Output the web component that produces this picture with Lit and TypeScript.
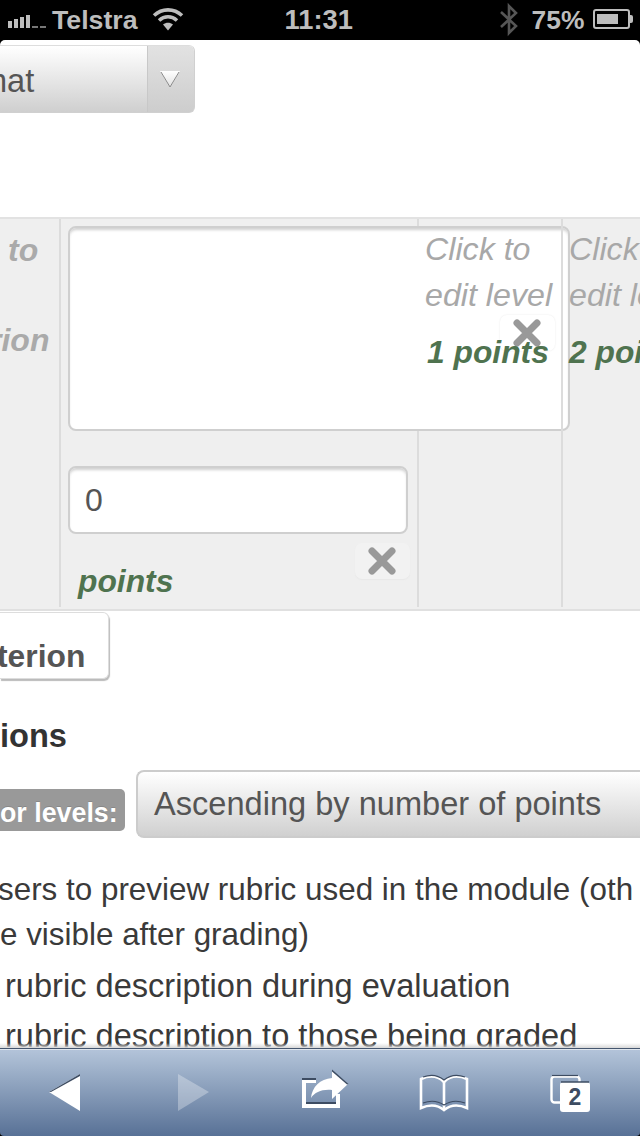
import { LitElement, html, css, svg } from "lit";
import { customElement } from "lit/decorators.js";

@customElement("app-root")
export class AppRoot extends LitElement {
  static styles = css`
    :host { display: flex; flex-direction: column; width: 640px; height: 1136px; overflow: hidden; background: #000; font-family: "Liberation Sans", Arial, sans-serif; }
    .status { height: 40px; flex: none; display: flex; align-items: center; color: #bdbdbd; font-size: 26.7px; font-weight: 700; position: relative; }
    .status svg { display: block; flex: none; }
    .sig { margin-left: 8px; }
    .carrier { margin-left: 6px; }
    .wifi { margin-left: 14px; }
    .time { margin-left: 101px; font-size: 27.3px; width: 68px; }
    .bt { margin-left: 146px; }
    .pct { margin-left: 13px; width: 61px; font-size: 26.4px; }
    .content { flex: 1; min-height: 0; background: #fff; border-radius: 5px 5px 0 0; overflow: hidden; display: flex; flex-direction: column; position: relative; color: #333; }
    .top { height: 177px; flex: none; padding-top: 5px; box-sizing: border-box; }
    .fmt { width: 195px; height: 68px; box-sizing: border-box; display: flex; border-radius: 0 6px 6px 0; border: 1px solid #d0d0d0; border-left: 0; border-top-color: #ddd; background: linear-gradient(#fff, #cfcfcf); color: #555; font-size: 32.6px; overflow: hidden; }
    .fmt .v { flex: 1; line-height: 70px; margin-left: -11px; }
    .fmt .arrow { width: 47px; padding-right: 3px; box-sizing: border-box; background: linear-gradient(#e2e2e2, #cdcdcd); border-left: 1px solid #c8c8c8; display: flex; align-items: center; justify-content: center; }
    .table { height: 394px; flex: none; box-sizing: border-box; background: #efefef; border-top: 2px solid #e2e2e2; border-bottom: 2px solid #e0e0e0; display: flex; font-size: 32px; line-height: 46px; position: relative; }
    .col { height: 388px; box-sizing: border-box; flex: none; }
    .c1 { width: 61px; border-right: 2px solid #dcdcdc; padding-top: 8px; font-weight: 700; font-style: italic; color: #aaa; white-space: nowrap; }
    .c1 div { height: 45px; }
    .c1 .a { margin-left: 8px; }
    .c1 .b { margin-top: 45px; margin-left: -11px; }
    .c2 { width: 358px; border-right: 2px solid #dcdcdc; padding: 7px 0 0 7px; position: relative; }
    .area { width: 502px; height: 205px; box-sizing: border-box; background: #fff; border: 2px solid #cfcfcf; border-radius: 8px; box-shadow: inset 0 3px 3px -1px #d0d0d0; position: relative; }
    .input { width: 340px; height: 68px; margin-top: 35px; box-sizing: border-box; background: #fff; border: 2px solid #cfcfcf; border-radius: 8px; box-shadow: inset 0 3px 3px -1px #d0d0d0; font-size: 32px; line-height: 64px; padding-left: 15px; color: #555; }
    .xbtn { box-sizing: border-box; width: 55px; height: 36px; padding-right: 2px; border-radius: 7px; display: flex; align-items: center; justify-content: center; }
    .x1 { background: #f2f2f2; margin: 9px 0 0 287px; box-shadow: 0 1px 1px #e8e8e8; }
    .pts { font-weight: 700; font-style: italic; color: #4f734f; white-space: nowrap; font-size: 31.8px; }
    .c2 .pts { margin: -21px 0 0 10px; }
    .c3 { width: 144px; border-right: 2px solid #dcdcdc; padding: 7px 0 0 6px; position: relative; }
    .c3 .txt, .c4 .txt { font-style: italic; color: #a8a8a8; white-space: nowrap; font-size: 32.2px; position: relative; z-index: 2; }
    .c3 .pts, .c4 .pts { position: relative; z-index: 2; margin-top: 11px; margin-left: 2px; }
    .x2 { position: absolute; z-index: 1; left: 81px; top: 96px; background: #fff; box-shadow: 0 0 2px #e8e8e8; }
    .c4 { flex: 1; padding: 7px 0 0 6px; overflow: hidden; }
    .c4 .pts { margin-left: 0; }
    .add { width: 109px; height: 67px; margin-top: 1px; box-sizing: border-box; flex: none; background: #fff; border: 1px solid #ddd; border-left: 0; border-radius: 0 6px 6px 0; box-shadow: 1px 2px 1px #bbb; font-weight: 700; font-size: 31.8px; color: #555; line-height: 86px; overflow: hidden; white-space: nowrap; }
    .add span { margin-left: -3px; }
    h3 { margin: 35px 0 0 0; font-size: 32.6px; line-height: 44px; font-weight: 700; color: #333; }
    .row { display: flex; align-items: flex-start; margin-top: 12px; }
    .badge { width: 125px; height: 42px; box-sizing: border-box; margin-top: 19px; flex: none; background: #999; color: #fff; font-weight: 700; font-size: 26.8px; line-height: 48px; border-radius: 0 5px 5px 0; white-space: nowrap; text-shadow: 0 -1px 0 #888; }
    .sel { margin-left: 11px; flex: 1; height: 68px; box-sizing: border-box; border: 2px solid #ccc; border-right: 0; border-radius: 8px 0 0 8px; background: linear-gradient(#fff, #d0d0d0); color: #555; font-size: 32.6px; line-height: 64px; padding-left: 16px; white-space: nowrap; }
    .lines { margin-top: 29px; font-size: 32.6px; color: #3a3a3a; white-space: nowrap; }
    .lines div { height: 45px; line-height: 45px; }
    .lines .w { font-size: 31.4px; }
    .lines .l1 { margin-left: -2px; }
    .lines .i { margin-left: 5px; }
    .lines .gap { margin-top: 6px; }
    .lines .gap2 { margin-top: 5px; }
    .fade { position: absolute; left: 0; right: 0; bottom: 0; height: 5px; background: linear-gradient(rgba(255,255,255,0), #d8d8d8); }
    .bar { height: 88px; flex: none; box-sizing: border-box; border-top: 1px solid #45566f; background: linear-gradient(#b4c4da 0, #a9bbd2 12%, #587196 100%); border-radius: 0 0 4px 4px; box-shadow: inset 0 1px 0 #dfe6ee; }
    .bar svg { display: block; }
    .tabn { font-family: "Liberation Sans", Arial, sans-serif; font-size: 23px; font-weight: 700; fill: #3d4c62; }
  `;

  render() {
    return html`
      <div class="status">
        <svg class="sig" width="38" height="40">
          <g fill="#bdbdbd"><rect x="0" y="21" width="4" height="7"/><rect x="6" y="19" width="4" height="9"/><rect x="12" y="17" width="4" height="11"/><rect x="18" y="15" width="4" height="13"/></g>
          <g fill="#777"><rect x="24" y="26" width="6" height="2"/><rect x="32" y="26" width="6" height="2"/></g>
        </svg>
        <span class="carrier">Telstra</span>
        <svg class="wifi" width="32" height="40" viewBox="0 0 32 40"><g fill="none" stroke="#bdbdbd" stroke-width="3.6"><path d="M2 15.5C10 8 22 8 30 15.5"/><path d="M7 20.5C12.5 15.5 19.5 15.5 25 20.5"/></g><path d="M11 24.5C14 22 18 22 21 24.5L16 30.5Z" fill="#bdbdbd"/></svg>
        <span class="time">11:31</span>
        <svg class="bt" width="20" height="40" viewBox="0 0 20 40"><path d="M2 12L17 26L10 33V6L17 13L2 27" fill="none" stroke="#565656" stroke-width="2.6"/></svg>
        <span class="pct">75%</span>
        <svg class="bat" width="42" height="40" viewBox="0 0 42 40"><rect x="1" y="10" width="35" height="18" rx="2" fill="none" stroke="#bdbdbd" stroke-width="2"/><rect x="4" y="14" width="21" height="10" fill="#bdbdbd"/><path d="M37 15h1a2 2 0 0 1 2 2v4a2 2 0 0 1-2 2h-1z" fill="#bdbdbd"/></svg>
      </div>
      <div class="content">
        <div class="top">
          <div class="fmt">
            <div class="v">hat</div>
            <div class="arrow"><svg width="20" height="18" viewBox="0 0 20 18"><defs><linearGradient id="ag" x1="0" y1="0" x2="0" y2="1"><stop offset="0" stop-color="#fff"/><stop offset="1" stop-color="#fff" stop-opacity=".2"/></linearGradient></defs><path d="M0 1H20L10 18Z" fill="url(#ag)"/><path d="M1 2L10 17L19 2" fill="none" stroke="#8a8a8a" stroke-width="1"/></svg></div>
          </div>
        </div>
        <div class="table">
          <div class="col c1"><div class="a">to</div><div class="b">rion</div></div>
          <div class="col c2">
            <div class="area"></div>
            <div class="input">0</div>
            <div class="xbtn x1">${this.x()}</div>
            <div class="pts">points</div>
          </div>
          <div class="col c3">
            <div class="txt">Click to<br />edit level</div>
            <div class="pts">1 points</div>
            <div class="xbtn x2">${this.x()}</div>
          </div>
          <div class="col c4">
            <div class="txt">Click to<br />edit level</div>
            <div class="pts">2 points</div>
          </div>
        </div>
        <div class="add"><span>terion</span></div>
        <h3>ions</h3>
        <div class="row">
          <div class="badge">or levels:</div>
          <div class="sel">Ascending by number of points</div>
        </div>
        <div class="lines">
          <div class="w l1">sers to preview rubric used in the module (oth</div>
          <div class="w">e visible after grading)</div>
          <div class="i gap">rubric description during evaluation</div>
          <div class="i gap2">rubric description to those being graded</div>
        </div>
        <div class="fade"></div>
      </div>
      <div class="bar">
        <svg width="640" height="87" viewBox="0 1049 640 87">
          <path d="M49 1092L80 1074V1111Z" fill="#fff"/><path d="M49 1092L80 1074V1076L51 1092Z" fill="#3d4c62"/>
          <path d="M178 1074L209 1092L178 1111Z" fill="#fff" opacity=".3"/>
          <g>
            <path d="M302 1080H316V1083H306V1104H336V1094H340V1108H302Z" fill="#fff"/>
            <path d="M302 1078H316V1080H302ZM306 1102H336V1104H306Z" fill="#3d4c62"/>
            <path d="M332 1071L348 1084L332 1099V1090C322 1089 315 1092 311 1098C312 1087 320 1079 332 1078Z" fill="#fff"/>
            <path d="M332 1069.5L348.5 1084L347 1084.5L332 1071.5Z" fill="#3d4c62"/>
          </g>
          <g fill="none" stroke="#fff" stroke-width="2.6">
            <path d="M421 1108V1079C430 1075 438 1076 444 1082C450 1076 458 1075 467 1079V1108C458 1104 450 1105 444 1110C438 1105 430 1104 421 1108Z"/>
            <path d="M444 1082V1110"/>
          </g>
          <g fill="none" stroke="#3d4c62" stroke-width="1.2"><path d="M423 1077C431 1074 438 1075 444 1080C450 1075 457 1074 465 1077"/><path d="M423 1103C431 1100 438 1101 444 1105C450 1101 457 1100 465 1103"/></g>
          <rect x="551.5" y="1076.5" width="28" height="26" rx="3" fill="none" stroke="#fff" stroke-width="2.4"/>
          <path d="M552 1075.5H578" stroke="#3d4c62" stroke-width="1.2"/>
          <rect x="560" y="1082" width="30" height="30" rx="3" fill="#fff"/>
          <path d="M561 1082H589" stroke="#3d4c62" stroke-width="1.5"/>
          <text class="tabn" x="575" y="1105" text-anchor="middle">2</text>
        </svg>
      </div>
    `;
  }

  x() {
    return svg`<svg width="28" height="28" viewBox="0 0 28 28" xmlns="http://www.w3.org/2000/svg"><path d="M4 4L24 24M24 4L4 24" stroke="#999" stroke-width="7" stroke-linecap="round"/></svg>`;
  }
}
